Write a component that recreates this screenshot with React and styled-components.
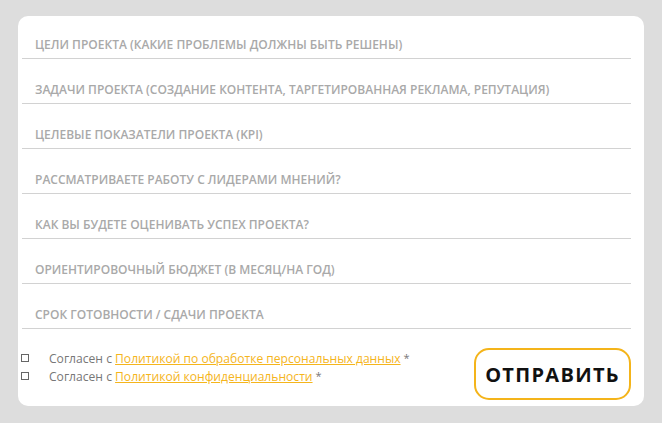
import React from 'react';
import styled, { createGlobalStyle } from 'styled-components';

const GlobalStyle = createGlobalStyle`
  html, body {
    margin: 0;
    padding: 0;
    background: #dddddd;
    font-family: 'Open Sans', 'Liberation Sans', sans-serif;
  }
`;

const Page = styled.div`
  width: 662px;
  height: 423px;
  padding: 16px 0 0 18px;
  box-sizing: border-box;
`;

const Card = styled.form`
  width: 626px;
  height: 390px;
  box-sizing: border-box;
  background: #fff;
  border-radius: 10px;
  padding: 0 13px 0 4px;
  display: flex;
  flex-direction: column;
`;

const Fields = styled.div`
  margin-top: -2px;
  display: flex;
  flex-direction: column;
`;

const Field = styled.label`
  height: 45px;
  border-bottom: 1px solid #d2d2d2;
  display: flex;
  align-items: flex-end;
  padding: 0 0 5px 13px;
  box-sizing: border-box;
  font-size: 12px;
  line-height: 16px;
  font-weight: 600;
  color: #a9a9a9;
  text-transform: uppercase;
`;

const Footer = styled.div`
  margin-top: 19px;
  display: flex;
  justify-content: space-between;
  align-items: flex-start;
`;

const Agreements = styled.div`
  margin-top: 1px;
  margin-left: -1px;
  display: flex;
  flex-direction: column;
`;

const Agree = styled.div`
  display: flex;
  align-items: center;
  gap: 20px;
  font-size: 12.1px;
  line-height: 17px;
  color: #777;
`;

const Box = styled.span`
  width: 8px;
  height: 8px;
  border: 1px solid #666;
  box-sizing: border-box;
  flex-shrink: 0;
`;

const Link = styled.a`
  color: #f5b51c;
  text-decoration: underline;
`;

const Star = styled.span`
  font-size: 11px;
  vertical-align: 1px;
`;

const Submit = styled.button`
  width: 157px;
  height: 52px;
  border: 2.5px solid #f4b41a;
  border-radius: 15px;
  background: #fff;
  font-family: 'Open Sans', 'Liberation Sans', sans-serif;
  font-weight: 700;
  font-size: 20px;
  letter-spacing: 1.3px;
  color: #111;
  padding: 0;
  cursor: pointer;
`;

const fields = [
  'Цели проекта (какие проблемы должны быть решены)',
  'Задачи проекта (создание контента, таргетированная реклама, репутация)',
  'Целевые показатели проекта (KPI)',
  'Рассматриваете работу с лидерами мнений?',
  'Как вы будете оценивать успех проекта?',
  'Ориентировочный бюджет (в месяц/на год)',
  'Срок готовности / сдачи проекта',
];

const App = () => {
  return (
    <Page>
      <GlobalStyle />
      <Card onSubmit={(e) => e.preventDefault()}>
        <Fields>
          {fields.map((f) => (
            <Field key={f}>{f}</Field>
          ))}
        </Fields>
        <Footer>
          <Agreements>
            <Agree>
              <Box />
              <span>
                Согласен с <Link href='#'>Политикой по обработке персональных данных</Link>
                <Star> *</Star>
              </span>
            </Agree>
            <Agree>
              <Box />
              <span>
                Согласен с <Link href='#'>Политикой конфиденциальности</Link>
                <Star> *</Star>
              </span>
            </Agree>
          </Agreements>
          <Submit type='submit'>ОТПРАВИТЬ</Submit>
        </Footer>
      </Card>
    </Page>
  );
};

export default App;
